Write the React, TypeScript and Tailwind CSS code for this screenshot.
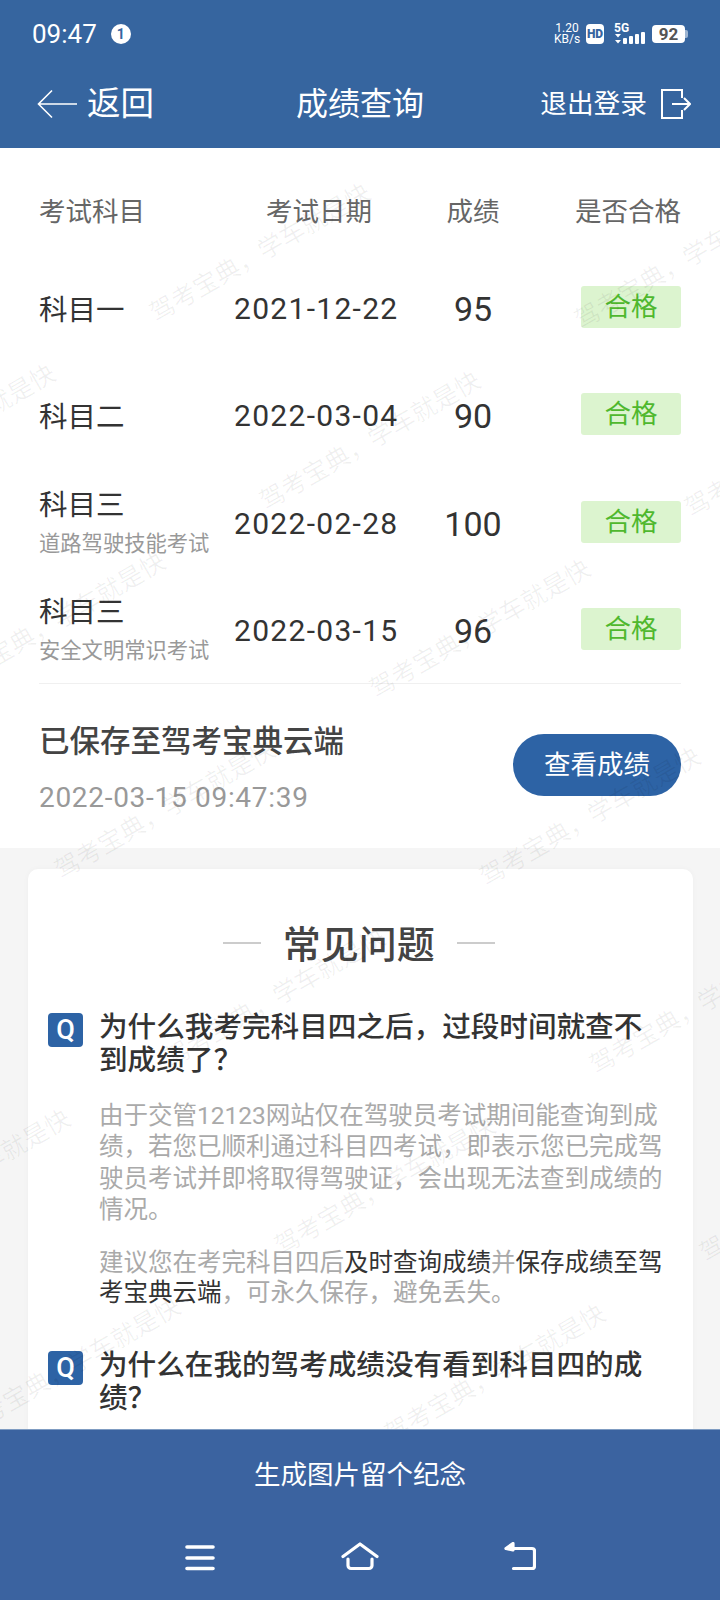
const rows = [
  { name: '科目一', date: '2021-12-22', score: '95' },
  { name: '科目二', date: '2022-03-04', score: '90' },
  { name: '科目三', sub: '道路驾驶技能考试', date: '2022-02-28', score: '100' },
  { name: '科目三', sub: '安全文明常识考试', date: '2022-03-15', score: '96' },
];

// repeating watermark, centres laid out on a slanted lattice
const marks: { x: number; y: number }[] = [];
for (let i = -2; i < 9; i++) {
  for (let j = -3; j < 4; j++) {
    const x = 260 + i * 110 + j * 425;
    const y = 253 + i * 188 + j * 7;
    if (x > -150 && x < 870 && y > 100 && y < 1500) marks.push({ x, y: y - 148 });
  }
}

function StatusBar() {
  return (
    <div className="flex h-[68px] items-center justify-between pl-[32px] pr-[32px] text-white">
      <div className="flex items-center gap-[14px]">
        <span className="text-[26px] leading-none">09:47</span>
        <span className="flex h-[20px] w-[20px] items-center justify-center rounded-full bg-white text-[14px] font-bold leading-none text-[#36659f]">
          1
        </span>
      </div>
      <div className="flex items-center">
        <div className="flex w-[26px] flex-col items-center text-[12px] leading-[11px]">
          <span>1.20</span>
          <span>KB/s</span>
        </div>
        <span className="ml-[6px] flex h-[20px] w-[18px] items-center justify-center rounded-[4px] bg-white text-[12px] font-black leading-none text-[#36659f]">
          HD
        </span>
        <svg className="ml-[10px]" width="34" height="22" viewBox="0 0 34 22" fill="white">
          <text x="0" y="9" fontSize="12" fontWeight="700" fontFamily="Roboto">5G</text>
          <path d="M1 11h6l-3 3.500zM1 17h6l-3 3.500z" />
          <rect x="9" y="15" width="4" height="6" rx="1" />
          <rect x="15" y="13" width="4" height="8" rx="1" />
          <rect x="21" y="11" width="4" height="10" rx="1" />
          <rect x="27" y="9" width="4" height="12" rx="1" />
        </svg>
        <div className="ml-[4px] flex items-center">
          <span className="flex h-[18px] w-[33px] items-center justify-center rounded-[4px] bg-white text-[17px] font-bold leading-none text-[#555]">
            92
          </span>
          <span className="h-[8px] w-[3px] rounded-r-[2px] bg-[#9db5d2]" />
        </div>
      </div>
    </div>
  );
}

function NavBar() {
  return (
    <div className="grid h-[72px] grid-cols-3 items-center text-white">
      <div className="flex items-center pl-[37px]">
        <svg width="40" height="30" viewBox="0 0 40 30" fill="none" stroke="white" strokeWidth="1.600">
          <path d="M40 15H2M15 1.500L1.500 15 15 28.500" />
        </svg>
        <span className="ml-[10px] text-[33.500px] leading-none">返回</span>
      </div>
      <div className="text-center text-[32px] leading-none">成绩查询</div>
      <div className="flex items-center justify-end pr-[29px]">
        <span className="whitespace-nowrap text-[26.700px] leading-none">退出登录</span>
        <svg className="ml-[14px]" width="30" height="30" viewBox="0 0 30 30" fill="none" stroke="white" strokeWidth="2">
          <path d="M21 9V1H1v28h20v-8" />
          <path d="M11 15h18M23 9l6 6-6 6" />
        </svg>
      </div>
    </div>
  );
}

function ScoreTable() {
  return (
    <div className="bg-white px-[39px] pt-[46px]">
      <div className="mb-[23px] grid h-9 grid-cols-[196px_168px_140px_1fr] items-center text-[26.500px] leading-none text-[#666]">
        <span className="whitespace-nowrap">考试科目</span>
        <span className="whitespace-nowrap text-center">考试日期</span>
        <span className="text-center">成绩</span>
        <span className="whitespace-nowrap text-right">是否合格</span>
      </div>
      {rows.map((row, index) => (
        <div key={index} className="grid h-[107.500px] grid-cols-[196px_168px_140px_1fr] items-center text-[#333]">
          <div className={row.sub ? 'flex flex-col' : 'mt-[8px] flex flex-col'}>
            <span className="text-[28.500px] leading-[40px]">{row.name}</span>
            {row.sub && <span className="mt-[4px] whitespace-nowrap text-[21.300px] leading-[28px] text-[#999]">{row.sub}</span>}
          </div>
          <span className="-ml-px mt-[4px] whitespace-nowrap text-[30px] leading-none tracking-[1.300px]">{row.date}</span>
          <span className="mt-[4px] text-center text-[34px] leading-none">{row.score}</span>
          <div className="flex justify-end">
            <span className="flex h-[42px] w-[100px] items-center justify-center rounded-[3px] bg-[#dcf4cf] text-[26.500px] leading-none text-[#4fb82e]">
              合格
            </span>
          </div>
        </div>
      ))}
      <div className="h-px bg-[#f0f0f0]" />
      <div className="flex h-[164px] items-start justify-between">
        <div className="flex flex-col">
          <span className="mt-[38px] text-[30.500px] font-medium leading-[40px] text-[#444]">已保存至驾考宝典云端</span>
          <span className="mt-[17px] text-[28px] leading-[38px] tracking-[0.700px] text-[#999]">2022-03-15 09:47:39</span>
        </div>
        <button className="mt-[50px] h-[62px] w-[168px] rounded-full bg-[#2d63a5] text-[26.500px] text-white">查看成绩</button>
      </div>
    </div>
  );
}

function QBadge() {
  return (
    <span className="mt-[2px] flex h-[34px] w-[35px] shrink-0 items-center justify-center rounded-[4px] bg-[#2d63a5] text-[27px] font-medium leading-none text-white">
      Q
    </span>
  );
}

function Faq() {
  return (
    <div className="mx-[27.500px] mt-[21px] rounded-[10px] bg-white pb-[80px] pl-[20.500px] pr-[27px] pt-[52px] shadow-[0_0_6px_rgba(0,0,0,0.03)]">
      <div className="flex h-12 items-center justify-center gap-[22px] pl-[4px]">
        <span className="-mt-[4px] h-[2px] w-[38px] bg-[#ccc]" />
        <span className="text-[38px] font-medium leading-none text-[#444]">常见问题</span>
        <span className="-mt-[4px] h-[2px] w-[38px] bg-[#ccc]" />
      </div>
      <div className="mt-[42px] flex gap-[16px]">
        <QBadge />
        <p className="text-[28.600px] font-medium leading-[33px] text-[#333]">
          为什么我考完科目四之后，过段时间就查不
          <br />
          到成绩了？
        </p>
      </div>
      <div className="ml-[51px] mt-[23px] text-[24.500px] leading-[31.300px] text-[#aaa]">
        <p>
          由于交管12123网站仅在驾驶员考试期间能查询到成
          <br />
          绩，若您已顺利通过科目四考试，即表示您已完成驾
          <br />
          驶员考试并即将取得驾驶证，会出现无法查到成绩的
          <br />
          情况。
        </p>
        <p className="mt-[23px] leading-[30px]">
          建议您在考完科目四后<span className="text-[#333]">及时查询成绩</span>并<span className="text-[#333]">保存成绩至驾</span>
          <br />
          <span className="text-[#333]">考宝典云端</span>，可永久保存，避免丢失。
        </p>
      </div>
      <div className="mt-[41px] flex gap-[16px]">
        <QBadge />
        <p className="text-[28.600px] font-medium leading-[33px] text-[#333]">
          为什么在我的驾考成绩没有看到科目四的成
          <br />
          绩？
        </p>
      </div>
    </div>
  );
}

function BottomBar() {
  return (
    <div className="relative flex h-[171px] flex-col items-center border-t border-[#7f9cc2] bg-[#3b63a0] text-white">
      <div className="mt-[27px] text-[26.500px] leading-[36px]">生成图片留个纪念</div>
      <div className="mt-[49px] grid grid-cols-[160px_160px_160px] items-center justify-items-center">
        <svg width="30" height="29" viewBox="0 0 30 29" fill="none" stroke="white" strokeWidth="3.600" strokeLinecap="round">
          <path d="M2 5h26M2 16h26M2 26.500h26" />
        </svg>
        <svg width="38" height="29" viewBox="0 0 38 29" fill="none" stroke="white" strokeWidth="3.200" strokeLinecap="round" strokeLinejoin="round">
          <path d="M2 14.500L19 2l17 12.500" />
          <path d="M7 17v6.500a3 3 0 0 0 3 3h18a3 3 0 0 0 3-3V17" />
        </svg>
        <svg width="32" height="29" viewBox="0 0 32 29" fill="none" stroke="white" strokeWidth="3.200" strokeLinecap="round" strokeLinejoin="round">
          <path d="M8 6.500h20a2.500 2.500 0 0 1 2.500 2.500v15a2.500 2.500 0 0 1-2.500 2.500H9.500" />
          <path d="M9 1.500L2 6.500 9 8z" fill="white" />
        </svg>
      </div>
    </div>
  );
}

export default function App() {
  return (
    <div className="flex h-[1600px] w-[720px] flex-col overflow-hidden bg-[#f5f5f5] font-['Roboto','Noto_Sans_CJK_SC',sans-serif]">
      <div className="h-[148px] shrink-0 bg-[#36659f]">
        <StatusBar />
        <NavBar />
      </div>
      <div className="relative flex-1 overflow-hidden">
        <ScoreTable />
        <Faq />
        <div className="pointer-events-none absolute inset-0">
          {marks.map((m, index) => (
            <span
              key={index}
              className="absolute whitespace-nowrap text-[25px] leading-none text-[rgba(0,0,0,0.06)]"
              style={{ left: m.x, top: m.y, transform: 'translate(-50%, -50%) rotate(-30deg)' }}
            >
              驾考宝典，学车就是快
            </span>
          ))}
        </div>
      </div>
      <BottomBar />
    </div>
  );
}
